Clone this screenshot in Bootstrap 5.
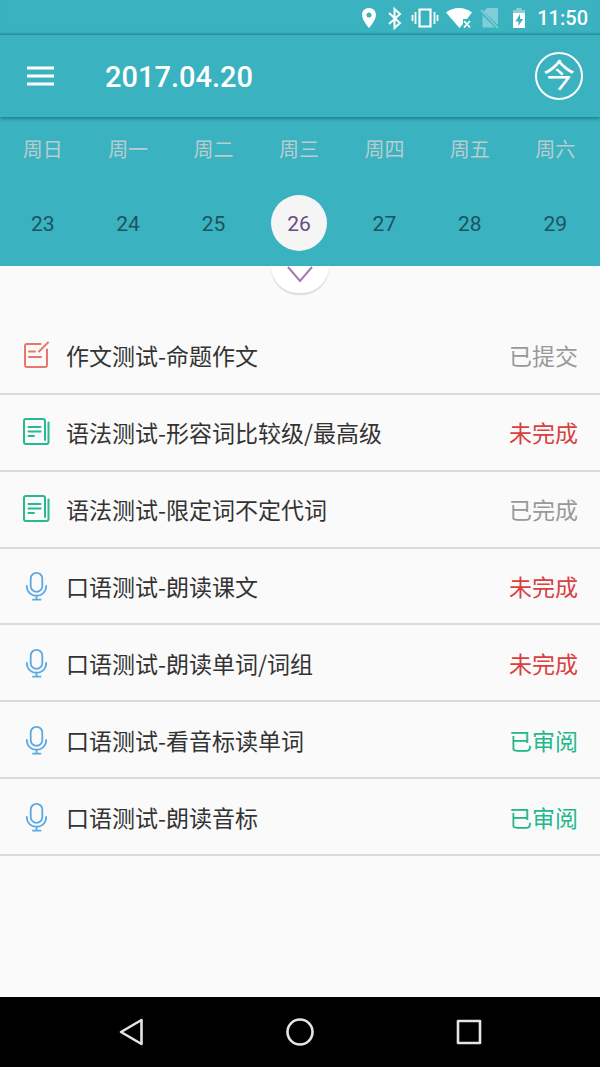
<!DOCTYPE html>
<html lang="zh-CN">
<head>
<meta charset="utf-8">
<meta name="viewport" content="width=device-width, initial-scale=1">
<title>2017.04.20</title>
<link href="https://cdn.jsdelivr.net/npm/bootstrap@5.3.0/dist/css/bootstrap.min.css" rel="stylesheet">
<style>
  body { font-family: Roboto, "Noto Sans CJK SC", sans-serif; background: #fafafa; color: #333; }
  svg { display: block; flex: none; }
  .teal { background: #3ab2c0; }
  .status-bar { height: 35px; padding: 0 12px 0 0; font-size: 20px; line-height: 35px; font-weight: 500; box-shadow: inset 0 -3px 3px -2px #24808c; }
  .status-time { padding-top: 2px; }
  .app-bar { height: 82px; padding: 0 17px 0 20px; box-shadow: 0 2px 3px #24808c; z-index: 2; }
  .app-title { font-size: 29px; line-height: 40px; font-weight: 500; margin: 2px 0 0 44px; }
  .plain-btn { background: none; border: 0; padding: 0; color: inherit; }
  .menu-btn { padding: 6px; }
  .today-btn { width: 48px; height: 48px; border: 2px solid #fff; border-radius: 50%; font-size: 32px; line-height: 36px; padding-bottom: 6px; font-family: "Noto Sans CJK SC", sans-serif; }
  .week { height: 149px; padding-right: 2px; text-align: center; }
  .week-name { height: 62px; font-size: 20px; line-height: 64px; color: #b9cdd1; font-weight: 400; }
  .day { width: 56px; height: 56px; border-radius: 50%; margin: 15px auto 0; font-size: 21px; line-height: 58px; color: #1b5560; }
  .day.picked { background: #f5f5f5; color: #6b4a80; }
  .pull { width: 58px; height: 27px; border-radius: 0 0 29px 29px; background: #fff; box-shadow: 0 2px 1px #dcdcdc; }
  .tasks { min-height: 538px; margin-top: 25px; grid-auto-rows: 1fr; font-family: "Noto Sans CJK SC", sans-serif; }
  .task { border-bottom: 2px solid #dcdcdc; padding: 0 22px; }
  .task-link { color: #333; font-size: 23px; line-height: 32px; gap: 16px; }
  .state { font-size: 23px; line-height: 32px; color: #999; }
  .state.todo { color: #d9403f; }
  .state.done { color: #22b98b; }
  .nav-bar { height: 70px; background: #000; color: #e4e4e4; padding: 0 116px; }
</style>
<script src="https://cdn.jsdelivr.net/npm/bootstrap@5.3.0/dist/js/bootstrap.bundle.min.js"></script>
</head>
<body>
<svg width="0" height="0" class="position-absolute" aria-hidden="true">
  <symbol id="essay" viewBox="0 0 28 30" fill="none" stroke="#e8786a" stroke-width="2" stroke-linecap="round" stroke-linejoin="round">
    <path d="M18.500 4H5Q3 4 3 6V25Q3 27 5 27H23Q25 27 25 25V9.500M26 2.500 17 11.500M7 11.500H13M7 17H19"/>
  </symbol>
  <symbol id="grammar" viewBox="0 0 28 30" fill="none" stroke="#28b98f" stroke-width="2" stroke-linecap="round" stroke-linejoin="round">
    <path d="M23 23V4Q23 2 21 2H4Q2 2 2 4V25Q2 27 4 27H24.500Q26.500 27 26.500 25V5.500M6.500 10H18.500M6.500 14.500H18.500M6.500 19H12"/>
  </symbol>
  <symbol id="oral" viewBox="0 0 28 30" fill="none" stroke="#5aa9e0" stroke-width="1.800" stroke-linecap="round">
    <rect x="8.700" y="1.800" width="11.600" height="19" rx="5.800"/><path d="M4.800 15C4.800 28 24.200 28 24.200 15M14.500 25V28.500M11 28.700H18.500"/>
  </symbol>
</svg>
<div class="d-flex flex-column min-vh-100">
  <div class="status-bar teal text-white d-flex align-items-center justify-content-end">
    <svg width="175" height="28" viewBox="0 0 175 28" fill="#fff" aria-hidden="true">
      <path fill-rule="evenodd" d="M7 4C2.800 4 0 7 0 11 0 16 7 24 7 24S14 16 14 11C14 7 11.200 4 7 4M7 8.500A2.500 2.500 0 1 1 7 13.500 2.500 2.500 0 0 1 7 8.500"/>
      <path d="M27 9 38 19 32.500 24V5L38 10 27 20" fill="none" stroke="#fff" stroke-width="2"/>
      <path d="M57.500 5.500H68.500V22.500H57.500Z" fill="none" stroke="#fff" stroke-width="2.200"/>
      <path d="M53.500 8V20M50.500 11V17M72.500 8V20M75.500 11V17" stroke="#fff" stroke-width="1.800"/>
      <path d="M84 8.500C91 2.500 103 2.500 110 8.500L105 15H101V20L97.500 24Z"/>
      <path d="M102 17 108 23.500M108 17 102 23.500" stroke="#fff" stroke-width="1.800"/>
      <g opacity=".35"><path d="M125 4H136V21L121.500 7.500ZM120.500 11 133 23.500H120.500Z"/><path d="M119 6 136 24" stroke="#fff" stroke-width="1.800"/></g>
      <path d="M151 9V6H154.500V4H159.500V6H163V9Z" opacity=".4"/>
      <path fill-rule="evenodd" d="M151 9H163V24H151ZM158 10 153.500 17.500H156.500V22L161 15H158Z"/>
    </svg>
    <span class="status-time">11:50</span>
  </div>
  <header class="app-bar teal text-white d-flex align-items-center position-relative">
    <button class="plain-btn menu-btn" type="button" aria-label="菜单">
      <svg width="29" height="22" viewBox="0 0 29 22" stroke="#fff" stroke-width="3"><path d="M1 3H28M1 11H28M1 19H28"/></svg>
    </button>
    <h1 class="app-title">2017.04.20</h1>
    <button class="plain-btn today-btn ms-auto" type="button">今</button>
  </header>
  <table class="week teal w-100 d-block">
    <thead class="d-block"><tr class="d-flex">
      <th class="week-name col">周日</th><th class="week-name col">周一</th><th class="week-name col">周二</th><th class="week-name col">周三</th><th class="week-name col">周四</th><th class="week-name col">周五</th><th class="week-name col">周六</th>
    </tr></thead>
    <tbody class="d-block"><tr class="d-flex">
      <td class="col"><div class="day">23</div></td><td class="col"><div class="day">24</div></td><td class="col"><div class="day">25</div></td><td class="col"><div class="day picked">26</div></td><td class="col"><div class="day">27</div></td><td class="col"><div class="day">28</div></td><td class="col"><div class="day">29</div></td>
    </tr></tbody>
  </table>
  <main class="flex-grow-1">
    <button class="plain-btn pull d-flex justify-content-center mx-auto" type="button" aria-label="展开日历">
      <svg width="28" height="18" viewBox="0 0 28 18" fill="none" stroke="#a678b8" stroke-width="2"><path d="M2 1 14 15 26 1"/></svg>
    </button>
    <ul class="tasks list-unstyled mb-0 d-grid">
      <li class="task d-flex align-items-center justify-content-between"><a class="task-link d-flex align-items-center text-decoration-none" href="#"><svg width="28" height="30"><use href="#essay"/></svg><span>作文测试-命题作文</span></a><span class="state">已提交</span></li>
      <li class="task d-flex align-items-center justify-content-between"><a class="task-link d-flex align-items-center text-decoration-none" href="#"><svg width="28" height="30"><use href="#grammar"/></svg><span>语法测试-形容词比较级/最高级</span></a><span class="state todo">未完成</span></li>
      <li class="task d-flex align-items-center justify-content-between"><a class="task-link d-flex align-items-center text-decoration-none" href="#"><svg width="28" height="30"><use href="#grammar"/></svg><span>语法测试-限定词不定代词</span></a><span class="state">已完成</span></li>
      <li class="task d-flex align-items-center justify-content-between"><a class="task-link d-flex align-items-center text-decoration-none" href="#"><svg width="28" height="30"><use href="#oral"/></svg><span>口语测试-朗读课文</span></a><span class="state todo">未完成</span></li>
      <li class="task d-flex align-items-center justify-content-between"><a class="task-link d-flex align-items-center text-decoration-none" href="#"><svg width="28" height="30"><use href="#oral"/></svg><span>口语测试-朗读单词/词组</span></a><span class="state todo">未完成</span></li>
      <li class="task d-flex align-items-center justify-content-between"><a class="task-link d-flex align-items-center text-decoration-none" href="#"><svg width="28" height="30"><use href="#oral"/></svg><span>口语测试-看音标读单词</span></a><span class="state done">已审阅</span></li>
      <li class="task d-flex align-items-center justify-content-between"><a class="task-link d-flex align-items-center text-decoration-none" href="#"><svg width="28" height="30"><use href="#oral"/></svg><span>口语测试-朗读音标</span></a><span class="state done">已审阅</span></li>
    </ul>
  </main>
  <nav class="nav-bar d-flex align-items-center justify-content-between" aria-label="系统导航">
    <button class="plain-btn" type="button" aria-label="返回"><svg width="30" height="30" viewBox="0 0 30 30" fill="none" stroke="currentColor" stroke-width="2.600" stroke-linejoin="round"><path d="M25.500 3V27L5 15Z"/></svg></button>
    <button class="plain-btn" type="button" aria-label="主页"><svg width="30" height="30" viewBox="0 0 30 30" fill="none" stroke="currentColor" stroke-width="2.600"><circle cx="15" cy="15" r="12.500"/></svg></button>
    <button class="plain-btn" type="button" aria-label="最近任务"><svg width="30" height="30" viewBox="0 0 30 30" fill="none" stroke="currentColor" stroke-width="2.600" stroke-linejoin="round"><path d="M4 4H26V26H4Z"/></svg></button>
  </nav>
</div>
</body>
</html>
